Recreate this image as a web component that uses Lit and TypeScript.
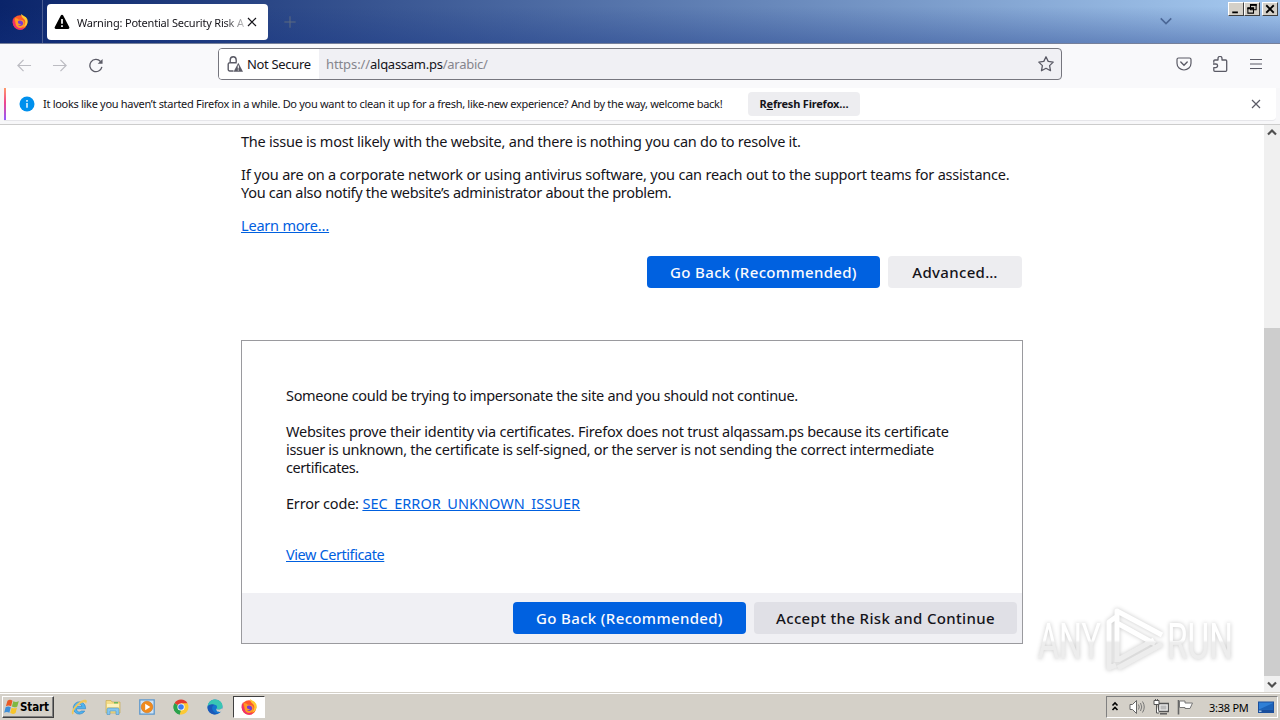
import { LitElement, html, css, svg } from "lit"
import { customElement, property } from "lit/decorators.js"

const glyphs: Record<string, unknown> = {
  back: svg`<path d="M15.500 8H1.500M7.500 2L1.500 8l6 6" fill="none" stroke="currentColor" stroke-width="1.300"/>`,
  forward: svg`<path d="M.5 8h14M8.500 2l6 6-6 6" fill="none" stroke="currentColor" stroke-width="1.300"/>`,
  reload: svg`<path d="M14.300 9.500A6.500 6.500 0 1 1 12.800 3.700" fill="none" stroke="currentColor" stroke-width="1.400"/><path d="M15 1v5.200H9.800z" fill="currentColor"/>`,
  star: svg`<path d="M8 .8l2.200 4.600 5 .7-3.600 3.500.9 5.100L8 12.300l-4.500 2.400.9-5.100L.8 6.100l5-.7z" fill="none" stroke="currentColor" stroke-width="1.300" stroke-linejoin="round"/>`,
  pocket: svg`<path d="M2.500 2h11A1.500 1.500 0 0 1 15 3.500v3.800a7 6.700 0 0 1-14 0V3.500A1.500 1.500 0 0 1 2.500 2z" fill="none" stroke="currentColor" stroke-width="1.200"/><path d="M4.800 6l3.200 3.200L11.200 6" fill="none" stroke="currentColor" stroke-width="1.400" stroke-linecap="round"/>`,
  puzzle: svg`<path d="M1.800 6.800V5a1 1 0 0 1 1-1H6V2.400a2 2 0 0 1 4 0V4h3.700a1 1 0 0 1 1 1v9.300a1 1 0 0 1-1 1H2.800a1 1 0 0 1-1-1v-2.700h2a1.700 1.700 0 0 0 0-3.600H1" fill="none" stroke="currentColor" stroke-width="1.300" stroke-linejoin="round"/>`,
  menu: svg`<path d="M2 3.500h12M2 8h12M2 12.500h12" stroke="currentColor" stroke-width="1.200"/>`,
  close: svg`<path d="M4 4l8 8M12 4l-8 8" stroke="currentColor" stroke-width="1.200"/>`,
  plus: svg`<path d="M8 1.500v13M1.500 8h13" stroke="currentColor" stroke-width="1.200"/>`,
  chevron: svg`<path d="M2 5l6 6 6-6" fill="none" stroke="currentColor" stroke-width="1.800"/>`,
  warning: svg`<path d="M8 .8a1.300 1.300 0 0 1 1.200.8l6 11.400a1.300 1.300 0 0 1-1.200 2H2a1.300 1.300 0 0 1-1.200-2l6-11.400A1.300 1.300 0 0 1 8 .8z" fill="#000"/><path d="M8 5v4.700M8 11.200v1.800" stroke="#fff" stroke-width="1.700"/>`,
  lock: svg`<path d="M6.500 15H2.700A1.500 1.500 0 0 1 1.200 13.500V8.200a1.500 1.500 0 0 1 1.500-1.500h7M3.200 6.500V3.900a3 3.200 0 0 1 6 0v2.600" fill="none" stroke="#5b5b66" stroke-width="1.400"/><path d="M11.300 6.800l4.700 8.900H6.600z" fill="#5b5b66"/><path d="M11.300 9.500v3M11.300 13.500v1" stroke="#fff" stroke-width="1.100"/>`,
  info: svg`<circle cx="8" cy="8" r="7.500" fill="#0090ed"/><path d="M8 7v4.800M8 4v1.700" stroke="#fff" stroke-width="1.400"/>`,
  firefox: svg`
    <circle cx="8" cy="8.500" r="7.300" fill="#ff5a2b"/>
    <path d="M9.200.100C9 2 10 3.500 12 5c2.200 2.400 1.500 6-1.300 8.500 4.500-1 5.800-5 4.500-8.500C13.900 2.300 11 2 9.200.100z" fill="#ffc930"/>
    <path d="M1.400 3.500C.3 5.700.2 10 2.400 12.800c2.400 3.200 7 3.700 9.800 1.700C6.500 14.600 2.500 10.500 1.400 3.500z" fill="#ee3070"/>
    <path d="M3 4.300c1.400-.4 2.600 0 3.400 1.200l3 .5c1.900.2 3.200 1.600 3.200 3.400a4.500 4.500 0 0 1-9 .1C3.500 8 2.900 6.300 3 4.300z" fill="#ff9a26"/>
    <path d="M6 7.300c1.500-1.600 5.200-.6 5.200 2.100-.1 2.400-3.400 3.400-5.300 1.700 1.600.2 2.600-.2 3.300-.9-1.400.2-2.800-.2-3.200-1.400z" fill="#7a3bd0"/>`,
  ie: svg`
    <path d="M14.600 8.800a6.200 6.200 0 1 0-.8 3.200h-3.400a2.900 2.900 0 0 1-5-2.200h9.200zM5.400 7.300a2.800 2.800 0 0 1 5.500 0z" fill="#4fb3ee" stroke="#1d77c2" stroke-width=".5"/>
    <path d="M1.400 15.400C-1 13.200 3.800 6 9 2.600c3-2 6.500-2.400 6.800-.7.200 1-.3 2-.9 3C15 3 13 2.700 10.500 4 6 6.500 1.700 12.300 2.700 14.300c-.3.500-.8 1-1.300 1.100z" fill="#f0c75a"/>`,
  explorer: svg`
    <path d="M1 1.500h5l1 1.500h8V14H1z" fill="#f5dd88" stroke="#c5a545" stroke-width=".6"/>
    <path d="M2 5h12v3H2z" fill="#fdf2bc"/><path d="M9 3h4v1.500H9z" fill="#6cb85c"/>
    <path d="M2 15.500V10.500q0-1.500 1.500-1.500h9q1.500 0 1.500 1.500v5h-3v-3.500H5v3.500z" fill="#85c6ee" stroke="#4c93c7" stroke-width=".6"/>`,
  player: svg`
    <path d="M.8.800h14.400v14.400H.8z" fill="#cfe2f4" stroke="#5d97cc" stroke-width="1.300"/>
    <circle cx="8" cy="8" r="5.800" fill="#f08a1d" stroke="#c96a0e" stroke-width=".5"/><path d="M6.200 4.800v6.400L11.300 8z" fill="#fff"/>`,
  chrome: svg`
    <path d="M8 8L1.500 4.300A7.500 7.500 0 0 1 14.500 4.300z" fill="#e33b2e"/>
    <path d="M8 8V4.300h6.500A7.500 7.500 0 0 1 8 15.500z" fill="#fcc934"/>
    <path d="M8 8l-1 7.400A7.500 7.500 0 0 1 1.500 4.300z" fill="#2ba24c"/>
    <path d="M8 15.500L11.300 9.800 8 8 4.700 9.900 7 15.400z" fill="#fcc934"/>
    <path d="M1.500 4.300L4.800 10 8 11.500 6.500 15.400A7.500 7.500 0 0 1 1.500 4.300z" fill="#2ba24c"/>
    <circle cx="8" cy="8" r="3.600" fill="#fff"/><circle cx="8" cy="8" r="2.800" fill="#3c7df0"/>`,
  edge: svg`
    <circle cx="8" cy="8" r="7.500" fill="#1476cf"/>
    <path d="M.6 7.500C1.200 3 4.300.5 8 .5c4.500 0 7.500 3.200 7.500 6.500 0 2.500-2 3.700-4 3.600-1.500 0-2.200-.7-1.600-1.500.8-1.600-.4-3.400-2.500-3.400C4.500 5.700 2 5.800.6 7.500z" fill="#39c6b4"/>
    <path d="M.6 7.500C2 5 6 4.500 7.800 6 5.500 6 4.600 8.500 5.500 10.800c1 2.500 3.500 3.700 5.700 3.500C6.500 17.500-.3 13.500.6 7.500z" fill="#1b58b8"/>
    <path d="M9.900 9.100c-.6.800.1 1.500 1.600 1.500 1.300 0 2.600-.4 3.400-1.300l.8 2-2.500 1.700c-3 .3-4.700-1.500-3.300-3.900z" fill="#d4d0c8"/>`,
  windows: svg`
    <path d="M3.500 1.700C5.300.3 7 .7 8.500 1.700L7.100 7.200C5.300 6.100 3.600 6.100 1.900 7.200z" fill="#ea5a24"/>
    <path d="M9.300 2.200c1.900 1 3.600 1 5.500-.2L13.300 7.500c-1.700 1.100-3.500 1.100-5.400.1z" fill="#7fb842"/>
    <path d="M1.600 8.200c1.800-1.100 3.400-1.100 5.200 0l-1.400 5.500c-1.800-1.100-3.500-1.100-5.200.1z" fill="#3f8fd8"/>
    <path d="M7.600 8.700c1.800.9 3.600.9 5.400-.2l-1.400 5.500c-1.800 1.200-3.600 1.100-5.400.1z" fill="#f7c52b"/>`,
  trayArrows: svg`<path d="M5.500 6.500L8 4l2.500 2.500M5.500 11L8 8.500l2.500 2.500" fill="none" stroke="#000" stroke-width="1.600"/>`,
  volume: svg`<path d="M1 5.500h2.500L7.500 1.500v13L3.500 10.500H1z" fill="#fff" stroke="#666" stroke-width="1"/><path d="M9.500 5.500q1.500 2.500 0 5M11.500 4q2.500 4 0 8M13.500 2.500q3.500 5.500 0 11" fill="none" stroke="#777" stroke-width="1"/>`,
  network: svg`<path d="M5.500 4.500h10v8h-10z" fill="#eee" stroke="#555" stroke-width="1.300"/><path d="M7.500 6.500h6v4h-6z" fill="#bbb"/><path d="M7 14.800h7" stroke="#555" stroke-width="1.400"/><path d="M1 1.500h5v4H1zM3.500 5.500v8.500H6" fill="#fff" stroke="#555"/><path d="M2.500 0v2M4.500 0v2" stroke="#555"/>`,
  flag: svg`<path d="M1.500 1v14.500" stroke="#666" stroke-width="1.600"/><path d="M2.500 2H8v2h7.500l-2.500 5.500H8V8.500H2.500z" fill="#fff" stroke="#777" stroke-width="1"/>`,
  desktop: svg`<path d="M0 2.500h16v11.500H0z" fill="#1b4f9c"/><path d="M1 3.500h14v7H1z" fill="#2f7fd6"/><path d="M1 10.500L15 4v6.500z" fill="#1c62b8"/><path d="M1 11.500h2.500v1.500H1z" fill="#9fc3e6"/>`,
  minimize: svg`<path d="M3 12.500h7.500" stroke="#000" stroke-width="2.400"/>`,
  restore: svg`<path d="M6 2.500h7.500v6.500H6zM2.500 7H10v6.500H2.500z" fill="#d4d0c8" stroke="#000" stroke-width="1.400"/><path d="M5.300 2.500h9M1.800 7h9" stroke="#000" stroke-width="2.400"/>`,
  winClose: svg`<path d="M3 3l10 10M13 3L3 13" stroke="#000" stroke-width="2.400"/>`,
  up: svg`<path d="M4 9.500L8 5.500l4 4" fill="none" stroke="#505050" stroke-width="2.200"/>`,
  down: svg`<path d="M4 6.500L8 10.500l4-4" fill="none" stroke="#505050" stroke-width="2.200"/>`,
}

/**
 * ui-icon - 16 unit icon
 */
@customElement("ui-icon")
export class UiIcon extends LitElement {
  static styles = css`
    :host {
      display: block;
      flex: none;
      width: 16px;
      height: 16px;
    }

    svg {
      display: block;
      width: 100%;
      height: 100%;
    }
  `

  @property()
  name = ""

  render() {
    return html`<svg viewBox="0 0 16 16">${glyphs[this.name]}</svg>`
  }
}

@customElement("app-root")
export class AppRoot extends LitElement {
  static styles = css`
    :host {
      display: flex;
      flex-direction: column;
      position: relative;
      width: 1280px;
      height: 720px;
      overflow: hidden;
      background: #fff;
      color: #15141a;
      font-family: "Noto Sans", "Open Sans", sans-serif;
      white-space: nowrap;
    }

    * {
      box-sizing: border-box;
    }

    /* title bar */
    .titlebar {
      display: flex;
      flex: none;
      height: 44px;
      border-bottom: 1px solid #76809a;
      background: linear-gradient(rgba(20, 50, 130, 0) 15%, rgba(20, 50, 130, 0.36)),
        linear-gradient(90deg, #0a246a, #a6caf0);
    }

    .pinned {
      width: 43px;
      padding: 14px 0 0 12px;
      border-right: 1px solid #4a5d92;
    }

    .tab {
      display: flex;
      align-items: center;
      width: 221px;
      height: 36px;
      margin: 4px 0 0 4px;
      padding: 0 8px 0 7px;
      border-radius: 4px;
      background: #fff;
    }

    .tab-title {
      flex: 1;
      margin-left: 7px;
      overflow: hidden;
      font-size: 11px;
      letter-spacing: -0.2px;
      mask-image: linear-gradient(90deg, #000 88%, transparent 104%);
    }

    .tab-close {
      color: #15141a;
    }

    .new-tab {
      width: 14px;
      margin: 14px 0 0 15px;
      color: #5c6a80;
    }

    .all-tabs {
      width: 14px;
      margin: 13px 55px 0 auto;
      color: #4b6796;
    }

    .window-buttons {
      display: flex;
      height: 14px;
      margin: 2px 2px 0 0;
    }

    .window-button {
      display: flex;
      align-items: center;
      justify-content: center;
      width: 16px;
      height: 14px;
      border: 1px solid;
      border-color: #fff #404040 #404040 #fff;
      background: #d4d0c8;
    }

    .window-button ui-icon {
      width: 12px;
      height: 12px;
    }

    .window-button:last-child {
      margin-left: 2px;
    }

    /* navigation bar */
    .navbar {
      display: flex;
      flex: none;
      align-items: center;
      height: 44px;
      padding: 0 16px;
      background: #f9f9fb;
      color: #5b5b66;
    }

    .nav {
      margin-right: 20px;
      padding-bottom: 1px;
    }

    .nav.disabled {
      color: #bcbcc2;
    }

    .urlbar {
      display: flex;
      align-items: center;
      width: 844px;
      height: 32px;
      margin: -4px 0 0 94px;
      border: 1px solid #76767e;
      border-radius: 4px;
      background: #f0f0f4;
      overflow: hidden;
    }

    .identity {
      display: flex;
      align-items: center;
      gap: 4px;
      width: 100px;
      height: 100%;
      padding-left: 8px;
      background: #fff;
      color: #15141a;
      font-size: 13px;
      letter-spacing: -0.33px;
    }

    .url {
      flex: 1;
      margin-left: 7px;
      color: #85858d;
      font-size: 13px;
      letter-spacing: -0.26px;
    }

    .scheme {
      letter-spacing: -0.1px;
    }

    .host {
      color: #15141a;
    }

    .urlbar > ui-icon {
      margin-right: 7px;
    }

    .actions {
      display: flex;
      gap: 20px;
      margin: -4px 0 0 auto;
    }

    /* notification */
    .notice-wrap {
      flex: none;
      height: 37px;
      padding: 0 4px;
      border-bottom: 1px solid #ccc;
      background: #f7f7f9;
    }

    .notice {
      display: flex;
      align-items: center;
      height: 33px;
      padding-right: 12px;
      border-bottom: 1px solid #e6e6ea;
      border-radius: 0 0 4px 0;
      background: #fff;
      font-size: 11px;
    }

    .notice-bar {
      width: 2px;
      height: 100%;
      background: linear-gradient(#ff9a6a, #f0468c 45%, #9059ff);
    }

    .notice-icon {
      margin: 0 8px 0 13px;
    }

    .notice-text {
      width: 705px;
      padding-bottom: 2px;
      letter-spacing: -0.3px;
    }

    .refresh {
      width: 112px;
      height: 24px;
      border-radius: 4px;
      background: #ededf0;
      color: #15141a;
      font-size: 11px;
      font-weight: 700;
      line-height: 24px;
      text-align: center;
      letter-spacing: -0.2px;
    }

    .notice-close {
      margin-left: auto;
      color: #5b5b66;
    }

    /* page */
    .viewport {
      display: flex;
      flex: none;
      height: 567px;
    }

    .page {
      flex: 1;
      padding: 7px 0 0 241px;
      font-size: 14.5px;
      line-height: 18px;
      letter-spacing: -0.2px;
    }

    p {
      margin: 0 0 15px;
    }

    a {
      color: #0060df;
      text-decoration: underline;
    }

    .snug {
      letter-spacing: -0.24px;
    }

    .tight {
      letter-spacing: -0.31px;
    }

    .tighter {
      letter-spacing: -0.42px;
    }

    .loose {
      letter-spacing: 0.04px;
    }

    .buttons {
      display: flex;
      justify-content: flex-end;
      gap: 8px;
      width: 781px;
    }

    .button {
      height: 32px;
      border-radius: 4px;
      background: #ededf0;
      font-size: 15px;
      font-weight: 500;
      line-height: 32px;
      letter-spacing: 0.34px;
      text-align: center;
    }

    .primary {
      width: 233px;
      background: #0061e0;
      color: #fbfbfe;
    }

    .advanced {
      width: 134px;
    }

    .accept {
      width: 263px;
      background: #e0e0e6;
    }

    .first {
      margin-top: 22px;
    }

    .panel {
      display: flex;
      flex-direction: column;
      width: 782px;
      height: 304px;
      margin-top: 52px;
      border: 1px solid #9a9a9e;
    }

    .panel-body {
      flex: 1;
      padding: 45px 0 0 44px;
    }

    .panel-body p {
      margin-bottom: 18px;
    }

    .panel-body .code {
      margin-bottom: 33px;
    }

    .panel-footer {
      width: 780px;
      height: 50px;
      padding: 9px 5px 0 0;
      background: #f0f0f4;
    }

    .scrollbar {
      display: flex;
      flex-direction: column;
      align-items: center;
      width: 16px;
      background: #f0f0f0;
    }

    .thumb {
      width: 16px;
      height: 348px;
      margin-top: 187px;
      background: #cdcdcd;
    }

    /* taskbar */
    .taskbar {
      display: flex;
      flex: none;
      align-items: flex-start;
      height: 28px;
      padding: 3px 2px 0 2px;
      border-top: 1px solid #d4d0c8;
      background: #d4d0c8;
      box-shadow: inset 0 1px #fff;
    }

    .start {
      display: flex;
      align-items: center;
      width: 52px;
      height: 22px;
      padding-left: 1px;
      border: 1px solid;
      border-color: #fff #404040 #404040 #fff;
      box-shadow: inset -1px -1px #808080;
      color: #000;
      font-family: "DejaVu Sans Condensed", "DejaVu Sans", sans-serif;
      font-size: 11.5px;
      font-weight: 700;
      letter-spacing: -0.1px;
    }

    .launcher {
      display: flex;
      align-items: center;
      justify-content: center;
      width: 32px;
      height: 22px;
      margin-left: 2px;
    }

    .launcher:nth-child(2) {
      margin-left: 9px;
    }

    .launcher.active {
      border: 1px solid;
      border-color: #404040 #fff #fff #404040;
      background: #fff;
    }

    .tray {
      display: flex;
      align-items: center;
      width: 172px;
      height: 22px;
      margin-left: auto;
      border: 1px solid;
      border-color: #808080 #fff #fff #808080;
      color: #000;
      font-size: 11px;
    }

    .tray ui-icon {
      margin-right: 8px;
    }

    .tray ui-icon:first-child {
      margin-right: 6px;
    }

    .clock {
      width: 43px;
      margin: 0 9px 0 8px;
      letter-spacing: -0.25px;
    }

    /* watermark lies over the page */
    .watermark {
      position: absolute;
      left: 1020px;
      top: 595px;
      width: 240px;
      height: 90px;
      filter: drop-shadow(0 0 2px rgba(0, 0, 0, 0.22));
    }

    .brand {
      fill: url(#fade);
      font-family: Roboto, sans-serif;
      font-size: 50px;
      font-weight: 400;
    }
  `

  render() {
    return html`
      <div class="titlebar">
        <div class="pinned"><ui-icon name="firefox"></ui-icon></div>
        <div class="tab">
          <ui-icon name="warning"></ui-icon>
          <span class="tab-title">Warning: Potential Security Risk Ahead</span>
          <ui-icon class="tab-close" name="close"></ui-icon>
        </div>
        <ui-icon class="new-tab" name="plus"></ui-icon>
        <ui-icon class="all-tabs" name="chevron"></ui-icon>
        <div class="window-buttons">
          ${["minimize", "restore", "winClose"].map(
            (name) => html`<div class="window-button"><ui-icon name=${name}></ui-icon></div>`
          )}
        </div>
      </div>

      <div class="navbar">
        <ui-icon class="nav disabled" name="back"></ui-icon>
        <ui-icon class="nav disabled" name="forward"></ui-icon>
        <ui-icon class="nav" name="reload"></ui-icon>
        <div class="urlbar">
          <div class="identity"><ui-icon name="lock"></ui-icon><span>Not Secure</span></div>
          <div class="url"><span class="scheme">https://</span><span class="host">alqassam.ps</span>/arabic/</div>
          <ui-icon name="star"></ui-icon>
        </div>
        <div class="actions">
          <ui-icon name="pocket"></ui-icon>
          <ui-icon name="puzzle"></ui-icon>
          <ui-icon name="menu"></ui-icon>
        </div>
      </div>

      <div class="notice-wrap">
        <div class="notice">
          <div class="notice-bar"></div>
          <ui-icon class="notice-icon" name="info"></ui-icon>
          <div class="notice-text"><span>It looks like you haven’t started Firefox in a while. Do you want to clean it up for a fresh, like-new experience? And by the way, welcome back!</span></div>
          <div class="refresh">R<u>e</u>fresh Firefox…</div>
          <ui-icon class="notice-close" name="close"></ui-icon>
        </div>
      </div>

      <div class="viewport">
        <div class="page">
          <p class="snug">The issue is most likely with the website, and there is nothing you can do to resolve it.</p>
          <p>
            If you are on a corporate network or using antivirus software, you can reach out to the support teams for assistance.<br />
            <span class="tight">You can also notify the website’s administrator about the problem.</span>
          </p>
          <p><a>Learn more…</a></p>
          <div class="buttons first">
            <div class="button primary">Go Back (Recommended)</div>
            <div class="button advanced">Advanced…</div>
          </div>
          <div class="panel">
            <div class="panel-body">
              <p class="tight">Someone could be trying to impersonate the site and you should not continue.</p>
              <p class="snug">
                Websites prove their identity via certificates. Firefox does not trust alqassam.ps because its certificate<br />
                <span class="tight">issuer is unknown, the certificate is self-signed, or the server is not sending the correct intermediate</span><br />
                <span class="tighter">certificates.</span>
              </p>
              <p class="code">Error code: <a class="loose">SEC_ERROR_UNKNOWN_ISSUER</a></p>
              <p class="tighter"><a>View Certificate</a></p>
            </div>
            <div class="buttons panel-footer">
              <div class="button primary">Go Back (Recommended)</div>
              <div class="button accept">Accept the Risk and Continue</div>
            </div>
          </div>
        </div>
        <div class="scrollbar">
          <ui-icon name="up"></ui-icon>
          <div class="thumb"></div>
          <ui-icon name="down"></ui-icon>
        </div>
      </div>

      <div class="taskbar">
        <div class="start"><ui-icon name="windows"></ui-icon>Start</div>
        ${["ie", "explorer", "player", "chrome", "edge", "firefox"].map(
          (name) => html`
            <div class="launcher ${name === "firefox" ? "active" : ""}"><ui-icon name=${name}></ui-icon></div>
          `
        )}
        <div class="tray">
          <ui-icon name="trayArrows"></ui-icon>
          <ui-icon name="volume"></ui-icon>
          <ui-icon name="network"></ui-icon>
          <ui-icon name="flag"></ui-icon>
          <span class="clock">3:38 PM</span>
          <ui-icon name="desktop"></ui-icon>
        </div>
      </div>

      <svg class="watermark" viewBox="0 0 240 90">
        <defs>
          <linearGradient id="fade" gradientUnits="userSpaceOnUse" x1="0" y1="0" x2="0" y2="90">
            <stop offset=".5" stop-color="#fff" />
            <stop offset=".53" stop-color="#ededed" />
          </linearGradient>
        </defs>
        <text class="brand" x="18" y="64" textLength="63" lengthAdjust="spacingAndGlyphs">ANY</text>
        <text class="brand" x="147" y="64" textLength="66" lengthAdjust="spacingAndGlyphs">RUN</text>
        <path
          d="M96 22l-7 5v46l7-3M97 67V16l45 24M97 28l38 21M142 49L98 73M98 65l36-20"
          fill="none" stroke="url(#fade)" stroke-width="5" stroke-linejoin="round"
        />
      </svg>
    `
  }
}
